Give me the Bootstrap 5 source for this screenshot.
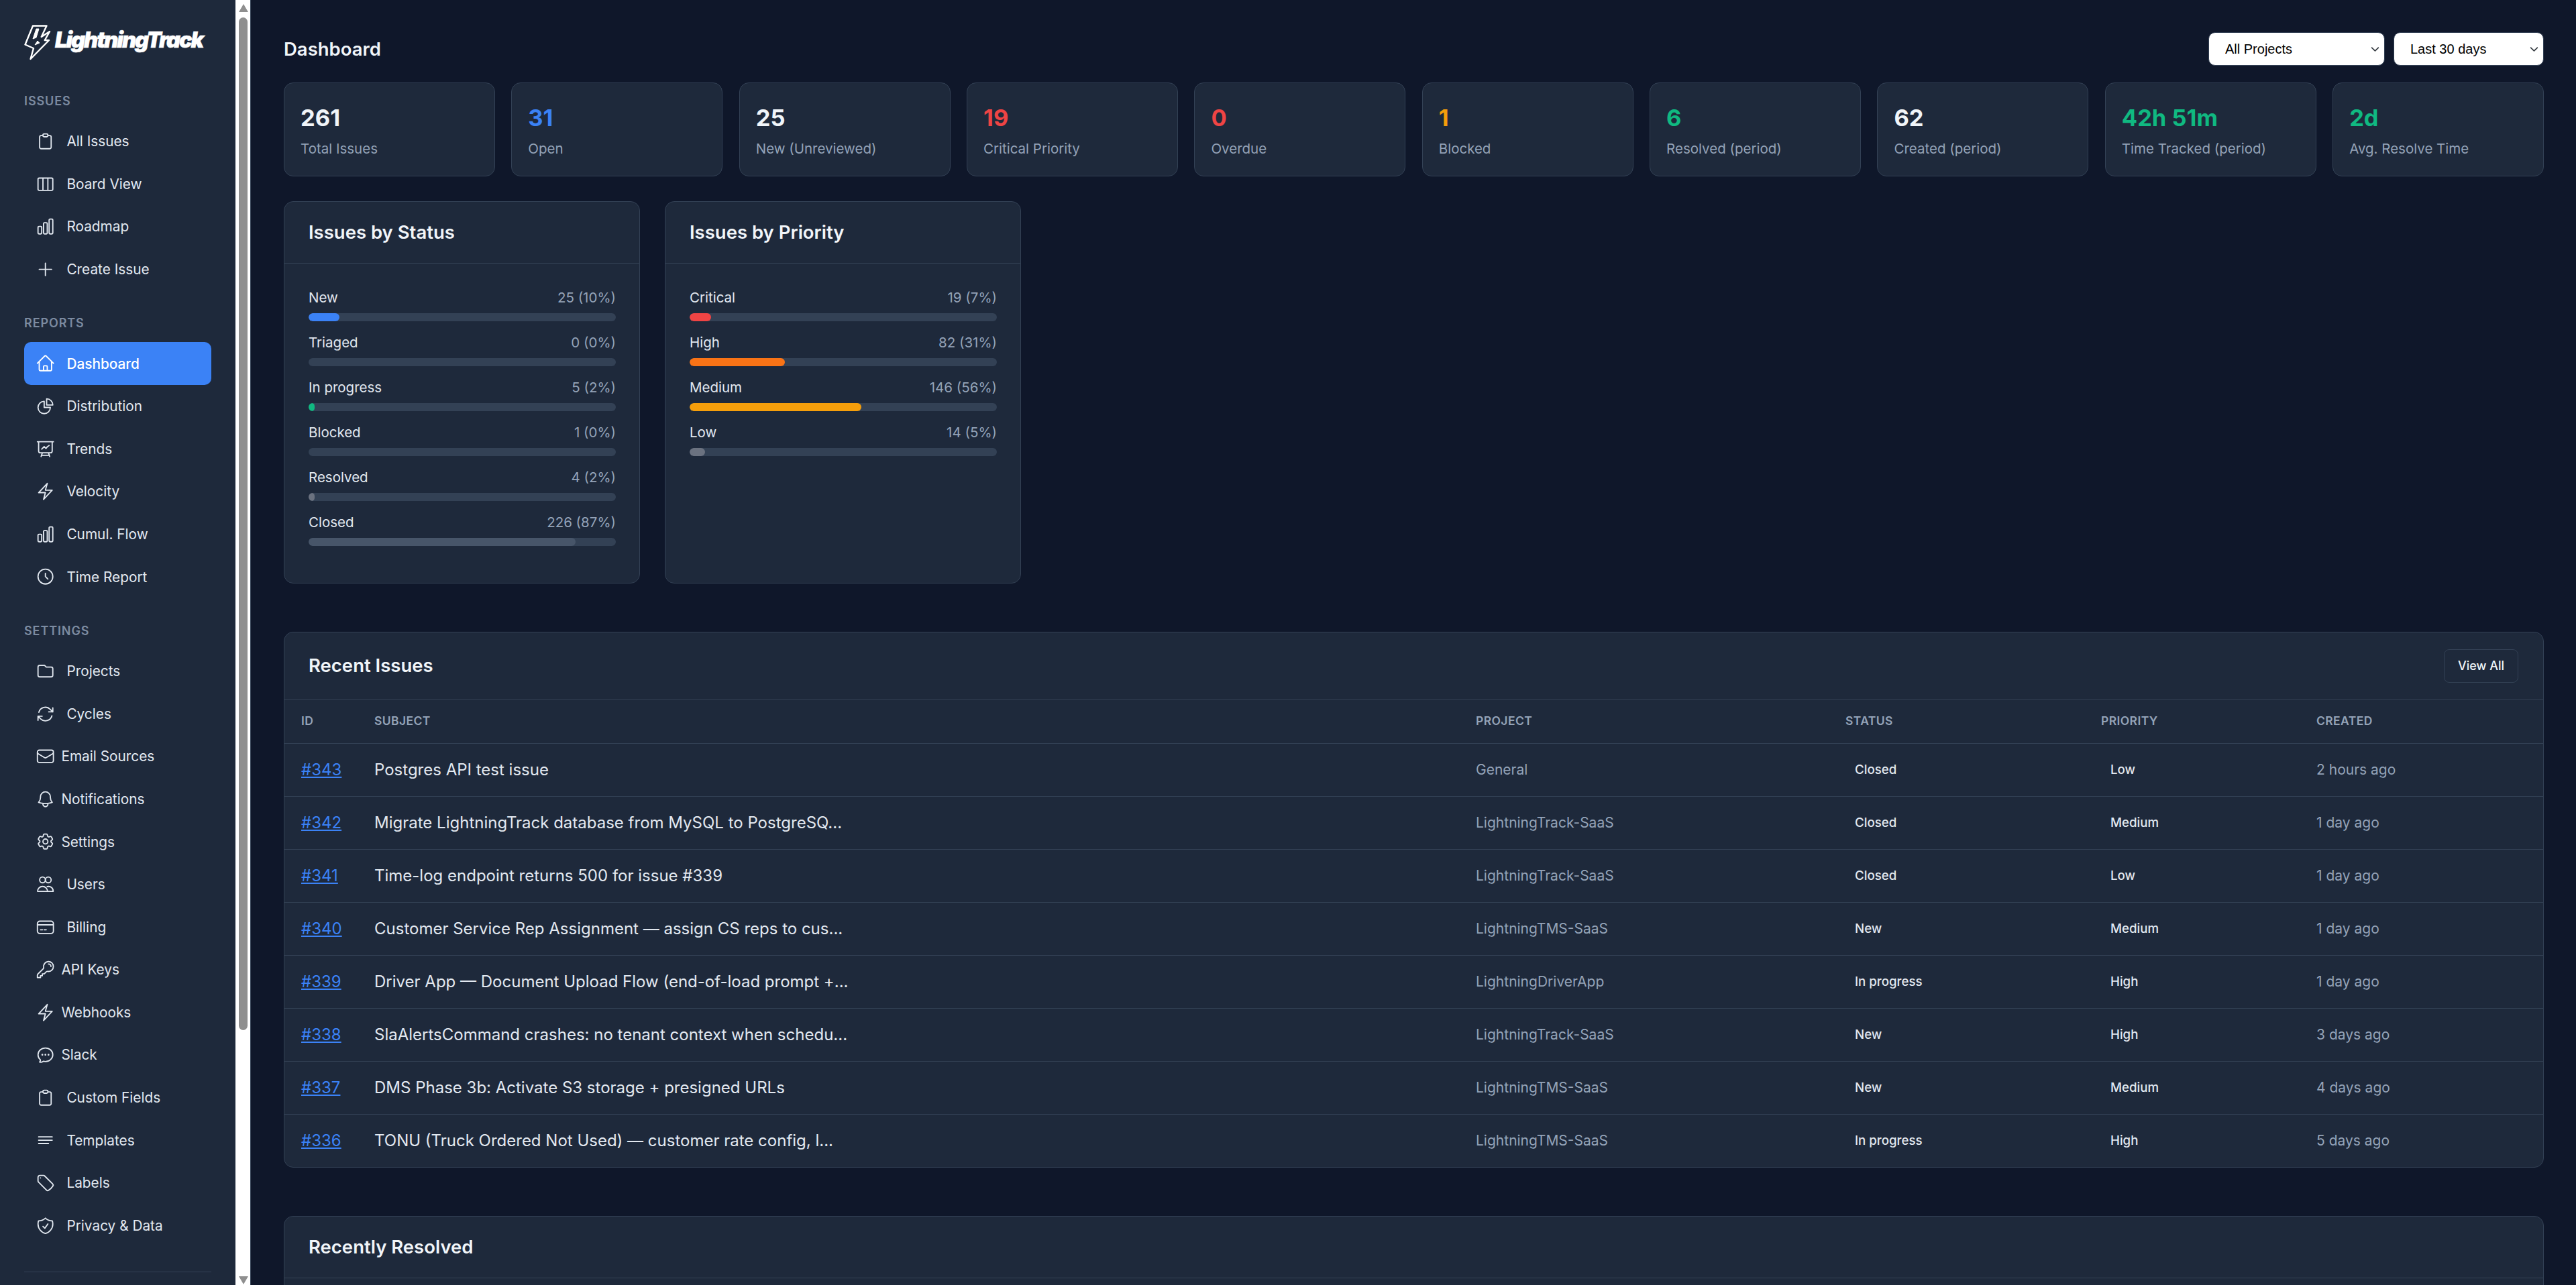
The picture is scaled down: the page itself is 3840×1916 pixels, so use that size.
<!DOCTYPE html>
<html lang="en">
<head>
<meta charset="UTF-8">
<meta name="viewport" content="width=device-width, initial-scale=1.0">
<title>LightningTrack - Dashboard</title>
<link href="https://cdn.jsdelivr.net/npm/bootstrap@5.3.2/dist/css/bootstrap.min.css" rel="stylesheet">
<style>
body { background: #0f172a; color: #e2e8f0; font-family: Inter, "Liberation Sans", sans-serif; height: 100vh; overflow: hidden; }

/* sidebar */
.side-bar { width: 351px; flex: none; background: #1e293b; padding: 37px 36px 0; overflow: hidden; }
.brand { height: 53px; margin-bottom: 47px; gap: 6px; color: #fff; text-decoration: none; }
.brand-icon { width: 40px; height: 54px; flex: none; }
.brand-text { font-size: 32.5px; font-weight: 900; font-style: italic; letter-spacing: -2px; line-height: 1; margin-bottom: 6px; -webkit-text-stroke: .6px #fff; }
.side-label { font-size: 18px; font-weight: 600; letter-spacing: .9px; color: #7c8ba1; text-transform: uppercase; line-height: 27px; margin-bottom: 15px; }
.side-group { margin-bottom: 35px; }
.side-nav .nav-link { height: 63.6px; padding: 0 0 0 17px; color: #e2e8f0; font-size: 20.8px; font-weight: 400; border-radius: 10px; gap: 17px; }
.side-nav .nav-link.tight { gap: 9px; }
.side-nav .nav-link.active { background: #3b82f6; color: #fff; font-weight: 500; }
.side-icon { width: 29.4px; height: 29.4px; flex: none; fill: none; stroke: currentColor; stroke-width: 1.5; stroke-linecap: round; stroke-linejoin: round; }
.side-rule { border-top: 1px solid #334155; margin-top: 37px; }

/* fake classic scrollbar of the sidebar */
.side-scroll { width: 23px; flex: none; background: #fff; border-right: 1px solid #334155; padding: 6px 0 0 5px; }
.scroll-up, .scroll-down { width: 0; height: 0; margin-left: 0; border-left: 7.5px solid transparent; border-right: 7.5px solid transparent; }
.scroll-up { border-bottom: 12px solid #8f8f8f; }
.scroll-down { border-top: 12px solid #8f8f8f; margin-top: 367px; }
.scroll-thumb { width: 13px; height: 1510px; margin-top: 8px; background: #8f8f8f; border-radius: 7px; }

/* main area */
.main-area { flex: 1; min-width: 0; padding: 48px 48px 0 49px; overflow: hidden; }
.page-title { font-size: 27.5px; font-weight: 600; color: #f1f5f9; margin: 0; }
.filter-wrap { gap: 13px; }
.filter-select { height: 50px; padding: 0 24px; font-family: "Liberation Sans", sans-serif; font-size: 20px; color: #000; background-color: #fff; border: 1px solid #334155; border-radius: 10px; background-position: right 5px center; background-size: 17px 13px; }
.filter-projects { width: 263px; }
.filter-days { width: 224px; }

.stat-grid { display: grid; grid-template-columns: repeat(10, 1fr); gap: 24.5px; margin-top: 25px; }
.panel { background: #1e293b; border: 1px solid #334155; border-radius: 14px; color: #e2e8f0; --bs-card-cap-bg: transparent; }
.stat-box { height: 140px; padding: 26px 24px 0; }
.stat-num { font-size: 34.5px; font-weight: 700; line-height: 52px; color: #f1f5f9; }
.stat-cap { font-size: 20.5px; line-height: 30px; color: #94a3b8; margin-top: 5px; white-space: nowrap; }
.c-blue { color: #3b82f6; }
.c-red { color: #ef4444; }
.c-amber { color: #f59e0b; }
.c-green { color: #10b981; }

.chart-grid { display: grid; grid-template-columns: repeat(auto-fill, 531px); gap: 37px; margin-top: 37px; }
.panel-head { height: 92px; padding: 0 36px; border-bottom: 1px solid #334155; }
.panel-title { font-size: 27.5px; font-weight: 600; color: #f1f5f9; margin: 0; }
.panel-body { padding: 37px 35px 37px 36px; }
.bar-row { margin-bottom: 18px; }
.bar-top { font-size: 20.5px; line-height: 28px; margin-bottom: 9px; }
.bar-val { color: #94a3b8; }
.bar-track { height: 12px; background: #334155; border-radius: 6px; }
.bar-track .progress-bar { border-radius: 6px; }
.bg-sblue { background: #3b82f6; }
.bg-sgreen { background: #10b981; }
.bg-sgrey { background: #6b7280; }
.bg-sslate { background: #475569; }
.bg-sred { background: #ef4444; }
.bg-sorange { background: #f97316; }
.bg-samber { background: #f59e0b; }

.list-panel { margin-top: 72px; overflow: hidden; }
.list-panel .head-tall { height: 100px; padding-right: 37px; }
.view-btn { height: 50px; width: 111px; padding: 0; font-size: 18px; font-weight: 500; color: #f1f5f9; background: transparent; border: 1px solid #334155; border-radius: 8px; }
.issue-table { table-layout: fixed; margin: 0; --bs-table-bg: transparent; --bs-table-color: #e2e8f0; --bs-table-border-color: #334155; }
.issue-table th { height: 65px; padding: 0 25px; font-size: 17.5px; font-weight: 600; letter-spacing: .4px; color: #94a3b8; text-transform: uppercase; vertical-align: middle; }
.issue-table td { height: 79px; padding: 0 25px; vertical-align: middle; font-size: 24px; line-height: 36px; white-space: nowrap; overflow: hidden; }
.issue-table tbody tr:last-child td { border-bottom: 0; }
.col-id { width: 109px; }
.col-subject { width: 1642px; }
.col-project { width: 551px; }
.col-status { width: 381px; }
.col-priority { width: 321px; }
.issue-id { color: #3b82f6; }
.issue-table td.cell-dim { font-size: 21px; color: #94a3b8; }
.issue-table td.cell-tag { font-size: 18.7px; }
.tag-text { display: inline-block; padding: 0 14px; font-weight: 500; color: #e2e8f0; }
.tail-body { height: 200px; }
</style>
</head>
<body>
<svg width="0" height="0" class="position-absolute">
  <symbol id="i-clip" viewBox="0 0 24 24"><path d="M9 5H6.8A1.8 1.8 0 0 0 5 6.8v12.4A1.8 1.8 0 0 0 6.8 21h10.4a1.8 1.8 0 0 0 1.8-1.8V6.8A1.8 1.8 0 0 0 17.200 5H15M9 5V4.500A1.500 1.500 0 0 1 10.500 3h3A1.500 1.500 0 0 1 15 4.500V5a1.500 1.500 0 0 1-1.500 1.500h-3A1.500 1.500 0 0 1 9 5z"/></symbol>
  <symbol id="i-cols" viewBox="0 0 24 24"><path d="M9 4.500v15m6-15v15M4.500 19.500h15a1.500 1.500 0 0 0 1.500-1.500V6a1.500 1.500 0 0 0-1.500-1.500h-15A1.500 1.500 0 0 0 3 6v12a1.500 1.500 0 0 0 1.500 1.500z"/></symbol>
  <symbol id="i-bars" viewBox="0 0 24 24"><path d="M3 13.125C3 12.504 3.504 12 4.125 12h2.250c.621 0 1.125.504 1.125 1.125v6.750C7.500 20.496 6.996 21 6.375 21h-2.250A1.125 1.125 0 0 1 3 19.875v-6.750zM9.750 8.625c0-.621.504-1.125 1.125-1.125h2.250c.621 0 1.125.504 1.125 1.125v11.250c0 .621-.504 1.125-1.125 1.125h-2.250a1.125 1.125 0 0 1-1.125-1.125V8.625zM16.500 4.125c0-.621.504-1.125 1.125-1.125h2.250C20.496 3 21 3.504 21 4.125v15.750c0 .621-.504 1.125-1.125 1.125h-2.250a1.125 1.125 0 0 1-1.125-1.125V4.125z"/></symbol>
  <symbol id="i-plus" viewBox="0 0 24 24"><path d="M12 4.500v15m7.500-7.500h-15"/></symbol>
  <symbol id="i-home" viewBox="0 0 24 24"><path d="M2.250 12l8.954-8.955c.44-.439 1.152-.439 1.591 0L21.750 12M4.500 9.750v10.125c0 .621.504 1.125 1.125 1.125H9.750v-4.875c0-.621.504-1.125 1.125-1.125h2.250c.621 0 1.125.504 1.125 1.125V21h4.125c.621 0 1.125-.504 1.125-1.125V9.750M8.250 21h8.250"/></symbol>
  <symbol id="i-pie" viewBox="0 0 24 24"><path d="M10.500 6a7.500 7.500 0 1 0 7.500 7.500h-7.500V6z"/><path d="M13.500 10.500H21A7.500 7.500 0 0 0 13.500 3v7.500z"/></symbol>
  <symbol id="i-trend" viewBox="0 0 24 24"><path d="M3.750 3v11.250A2.250 2.250 0 0 0 6 16.500h2.250M3.750 3h-1.500m1.500 0h16.500m0 0h1.500m-1.500 0v11.250A2.250 2.250 0 0 1 18 16.500h-2.250m-7.500 0h7.500m-7.500 0l-1 3m8.500-3l1 3m0 0l.5 1.500m-.5-1.500h-9.500m0 0l-.5 1.500m.75-9l3-3 2.148 2.148A12.061 12.061 0 0 1 16.500 7.605"/></symbol>
  <symbol id="i-bolt" viewBox="0 0 24 24"><path d="M3.750 13.500l10.500-11.250L12 10.500h8.250L9.750 21.750 12 13.500H3.750z"/></symbol>
  <symbol id="i-clock" viewBox="0 0 24 24"><path d="M12 8v4l3 3m6-3a9 9 0 1 1-18 0 9 9 0 0 1 18 0z"/></symbol>
  <symbol id="i-folder" viewBox="0 0 24 24"><path d="M3 7v10a2 2 0 0 0 2 2h14a2 2 0 0 0 2-2V9a2 2 0 0 0-2-2h-6l-2-2H5a2 2 0 0 0-2 2z"/></symbol>
  <symbol id="i-cycle" viewBox="0 0 24 24"><path d="M16.023 9.348h4.992v-.001M2.985 19.644v-4.992m0 0h4.992m-4.993 0l3.181 3.183a8.250 8.250 0 0 0 13.803-3.700M4.031 9.865a8.250 8.250 0 0 1 13.803-3.700l3.181 3.182m0-4.991v4.990"/></symbol>
  <symbol id="i-mail" viewBox="0 0 24 24"><path d="M21.750 6.750v10.500a2.250 2.250 0 0 1-2.250 2.250h-15a2.250 2.250 0 0 1-2.250-2.250V6.750m19.500 0A2.250 2.250 0 0 0 19.500 4.500h-15a2.250 2.250 0 0 0-2.250 2.250m19.500 0v.243a2.250 2.250 0 0 1-1.070 1.916l-7.500 4.615a2.250 2.250 0 0 1-2.360 0L3.320 8.910a2.250 2.250 0 0 1-1.070-1.916V6.750"/></symbol>
  <symbol id="i-bell" viewBox="0 0 24 24"><path d="M14.857 17.082a23.848 23.848 0 0 0 5.454-1.310A8.967 8.967 0 0 1 18 9.750v-.7V9A6 6 0 0 0 6 9v.75a8.967 8.967 0 0 1-2.312 6.022c1.733.64 3.560 1.085 5.455 1.310m5.714 0a24.255 24.255 0 0 1-5.714 0m5.714 0a3 3 0 1 1-5.714 0"/></symbol>
  <symbol id="i-cog" viewBox="0 0 24 24"><path d="M9.594 3.940c.09-.542.56-.94 1.110-.94h2.593c.55 0 1.020.398 1.110.94l.213 1.281c.063.374.313.686.645.87.074.04.147.083.22.127.324.196.72.257 1.075.124l1.217-.456a1.125 1.125 0 0 1 1.370.49l1.296 2.247a1.125 1.125 0 0 1-.26 1.431l-1.003.827c-.293.24-.438.613-.431.992a6.759 6.759 0 0 1 0 .255c-.007.378.138.75.43.99l1.005.828c.424.35.534.954.26 1.430l-1.298 2.247a1.125 1.125 0 0 1-1.369.491l-1.217-.456c-.355-.133-.75-.072-1.076.124a6.570 6.570 0 0 1-.22.128c-.331.183-.581.495-.644.869l-.213 1.280c-.09.543-.56.941-1.110.941h-2.594c-.55 0-1.020-.398-1.110-.94l-.213-1.281c-.062-.374-.312-.686-.644-.87a6.520 6.520 0 0 1-.22-.127c-.325-.196-.72-.257-1.076-.124l-1.217.456a1.125 1.125 0 0 1-1.369-.49l-1.297-2.247a1.125 1.125 0 0 1 .26-1.431l1.004-.827c.292-.24.437-.613.43-.992a6.932 6.932 0 0 1 0-.255c.007-.378-.138-.75-.43-.99l-1.004-.828a1.125 1.125 0 0 1-.26-1.430l1.297-2.247a1.125 1.125 0 0 1 1.370-.491l1.216.456c.356.133.751.072 1.076-.124.072-.044.146-.087.22-.128.332-.183.582-.495.644-.869l.214-1.281z"/><path d="M15 12a3 3 0 1 1-6 0 3 3 0 0 1 6 0z"/></symbol>
  <symbol id="i-users" viewBox="0 0 24 24"><circle cx="8.500" cy="6.500" r="3.500"/><circle cx="15.500" cy="6.500" r="3.500"/><path d="M2.500 20.500c0-3.500 2.600-6 6-6s6 2.500 6 6zM14.200 14.700c4.200-.9 7.300 1.700 7.300 5.800h-7"/></symbol>
  <symbol id="i-card" viewBox="0 0 24 24"><path d="M2.250 9h19.500M6 15h2.500M10.500 15H13M5.250 4.500h13.500a3 3 0 0 1 3 3v9a3 3 0 0 1-3 3H5.250a3 3 0 0 1-3-3v-9a3 3 0 0 1 3-3z"/></symbol>
  <symbol id="i-key" viewBox="0 0 24 24"><path d="M15.750 5.250a3 3 0 0 1 3 3m3 0a6 6 0 0 1-7.029 5.912c-.563-.097-1.159.026-1.563.43L10.500 17.250H8.250v2.250H6v2.250H2.250v-2.818c0-.597.237-1.170.659-1.591l6.499-6.499c.404-.404.527-1 .43-1.563A6 6 0 1 1 21.750 8.250z"/></symbol>
  <symbol id="i-chat" viewBox="0 0 24 24"><path d="M8.625 12a.375.375 0 1 1-.75 0 .375.375 0 0 1 .75 0zm0 0H8.250m4.125 0a.375.375 0 1 1-.75 0 .375.375 0 0 1 .75 0zm0 0H12m4.125 0a.375.375 0 1 1-.75 0 .375.375 0 0 1 .75 0zm0 0h-.375M21 12c0 4.556-4.030 8.250-9 8.250a9.764 9.764 0 0 1-2.555-.337A5.972 5.972 0 0 1 5.410 20.970a5.969 5.969 0 0 1-.474-.065 4.480 4.480 0 0 0 .978-2.025c.09-.457-.133-.901-.467-1.226C3.930 16.178 3 14.189 3 12c0-4.556 4.030-8.250 9-8.250s9 3.694 9 8.250z"/></symbol>
  <symbol id="i-lines" viewBox="0 0 24 24"><path d="M3.750 7.500h16.500M3.750 11.500h16.500M3.750 15.500h12"/></symbol>
  <symbol id="i-tag" viewBox="0 0 24 24"><path d="M9.568 3H5.250A2.250 2.250 0 0 0 3 5.250v4.318c0 .597.237 1.170.659 1.591l9.581 9.581c.699.699 1.780.872 2.607.33a18.095 18.095 0 0 0 5.223-5.223c.542-.827.369-1.908-.33-2.607L11.160 3.660A2.250 2.250 0 0 0 9.568 3z"/><path d="M6 6h.008v.008H6V6z"/></symbol>
  <symbol id="i-shield" viewBox="0 0 24 24"><path d="M9 12.750L11.250 15 15 9.750m-3-7.036A11.959 11.959 0 0 1 3.598 6 11.990 11.990 0 0 0 3 9.749c0 5.592 3.824 10.290 9 11.623 5.176-1.332 9-6.030 9-11.622 0-1.310-.21-2.571-.598-3.751h-.152c-3.196 0-6.100-1.248-8.250-3.285z"/></symbol>
</svg>

<div class="d-flex vh-100">
  <!-- sidebar -->
  <aside class="side-bar">
    <a href="#" class="brand d-flex align-items-center">
      <svg class="brand-icon" viewBox="0 0 40 54" fill="none" stroke="#fff" stroke-width="2.400" stroke-linejoin="round"><path d="M13 1.500H33.500L25.700 18 38 10 30.700 23H37L9.500 51 14 35 1.500 29.500z"/><path d="M18 6h4l-4 13-5 2z" fill="#fff" stroke-width="1"/><path d="M20 24l-4 6 7-3z" fill="#fff" stroke-width="1"/></svg>
      <span class="brand-text">LightningTrack</span>
    </a>

    <div class="side-group">
      <div class="side-label">Issues</div>
      <nav class="nav nav-pills flex-column side-nav">
        <a class="nav-link d-flex align-items-center" href="#"><svg class="side-icon"><use href="#i-clip"/></svg>All Issues</a>
        <a class="nav-link d-flex align-items-center" href="#"><svg class="side-icon"><use href="#i-cols"/></svg>Board View</a>
        <a class="nav-link d-flex align-items-center" href="#"><svg class="side-icon"><use href="#i-bars"/></svg>Roadmap</a>
        <a class="nav-link d-flex align-items-center" href="#"><svg class="side-icon"><use href="#i-plus"/></svg>Create Issue</a>
      </nav>
    </div>

    <div class="side-group">
      <div class="side-label">Reports</div>
      <nav class="nav nav-pills flex-column side-nav">
        <a class="nav-link active d-flex align-items-center" href="#"><svg class="side-icon"><use href="#i-home"/></svg>Dashboard</a>
        <a class="nav-link d-flex align-items-center" href="#"><svg class="side-icon"><use href="#i-pie"/></svg>Distribution</a>
        <a class="nav-link d-flex align-items-center" href="#"><svg class="side-icon"><use href="#i-trend"/></svg>Trends</a>
        <a class="nav-link d-flex align-items-center" href="#"><svg class="side-icon"><use href="#i-bolt"/></svg>Velocity</a>
        <a class="nav-link d-flex align-items-center" href="#"><svg class="side-icon"><use href="#i-bars"/></svg>Cumul. Flow</a>
        <a class="nav-link d-flex align-items-center" href="#"><svg class="side-icon"><use href="#i-clock"/></svg>Time Report</a>
      </nav>
    </div>

    <div>
      <div class="side-label">Settings</div>
      <nav class="nav nav-pills flex-column side-nav">
        <a class="nav-link d-flex align-items-center" href="#"><svg class="side-icon"><use href="#i-folder"/></svg>Projects</a>
        <a class="nav-link d-flex align-items-center" href="#"><svg class="side-icon"><use href="#i-cycle"/></svg>Cycles</a>
        <a class="nav-link tight d-flex align-items-center" href="#"><svg class="side-icon"><use href="#i-mail"/></svg>Email Sources</a>
        <a class="nav-link tight d-flex align-items-center" href="#"><svg class="side-icon"><use href="#i-bell"/></svg>Notifications</a>
        <a class="nav-link tight d-flex align-items-center" href="#"><svg class="side-icon"><use href="#i-cog"/></svg>Settings</a>
        <a class="nav-link d-flex align-items-center" href="#"><svg class="side-icon"><use href="#i-users"/></svg>Users</a>
        <a class="nav-link d-flex align-items-center" href="#"><svg class="side-icon"><use href="#i-card"/></svg>Billing</a>
        <a class="nav-link tight d-flex align-items-center" href="#"><svg class="side-icon"><use href="#i-key"/></svg>API Keys</a>
        <a class="nav-link tight d-flex align-items-center" href="#"><svg class="side-icon"><use href="#i-bolt"/></svg>Webhooks</a>
        <a class="nav-link tight d-flex align-items-center" href="#"><svg class="side-icon"><use href="#i-chat"/></svg>Slack</a>
        <a class="nav-link d-flex align-items-center" href="#"><svg class="side-icon"><use href="#i-clip"/></svg>Custom Fields</a>
        <a class="nav-link d-flex align-items-center" href="#"><svg class="side-icon"><use href="#i-lines"/></svg>Templates</a>
        <a class="nav-link d-flex align-items-center" href="#"><svg class="side-icon"><use href="#i-tag"/></svg>Labels</a>
        <a class="nav-link d-flex align-items-center" href="#"><svg class="side-icon"><use href="#i-shield"/></svg>Privacy &amp; Data</a>
      </nav>
    </div>
    <div class="side-rule"></div>
  </aside>
  <div class="side-scroll">
    <div class="scroll-up"></div>
    <div class="scroll-thumb"></div>
    <div class="scroll-down"></div>
  </div>

  <!-- main -->
  <main class="main-area">
    <div class="d-flex justify-content-between align-items-center">
      <h1 class="page-title">Dashboard</h1>
      <div class="d-flex filter-wrap">
        <select class="form-select filter-select filter-projects"><option>All Projects</option></select>
        <select class="form-select filter-select filter-days"><option>Last 30 days</option></select>
      </div>
    </div>

    <div class="stat-grid">
      <div class="card panel stat-box"><div class="stat-num">261</div><div class="stat-cap">Total Issues</div></div>
      <div class="card panel stat-box"><div class="stat-num c-blue">31</div><div class="stat-cap">Open</div></div>
      <div class="card panel stat-box"><div class="stat-num">25</div><div class="stat-cap">New (Unreviewed)</div></div>
      <div class="card panel stat-box"><div class="stat-num c-red">19</div><div class="stat-cap">Critical Priority</div></div>
      <div class="card panel stat-box"><div class="stat-num c-red">0</div><div class="stat-cap">Overdue</div></div>
      <div class="card panel stat-box"><div class="stat-num c-amber">1</div><div class="stat-cap">Blocked</div></div>
      <div class="card panel stat-box"><div class="stat-num c-green">6</div><div class="stat-cap">Resolved (period)</div></div>
      <div class="card panel stat-box"><div class="stat-num">62</div><div class="stat-cap">Created (period)</div></div>
      <div class="card panel stat-box"><div class="stat-num c-green">42h 51m</div><div class="stat-cap">Time Tracked (period)</div></div>
      <div class="card panel stat-box"><div class="stat-num c-green">2d</div><div class="stat-cap">Avg. Resolve Time</div></div>
    </div>

    <div class="chart-grid">
      <div class="card panel">
        <div class="panel-head d-flex align-items-center"><h2 class="panel-title">Issues by Status</h2></div>
        <div class="panel-body">
          <div class="bar-row"><div class="bar-top d-flex justify-content-between"><span>New</span><span class="bar-val">25 (10%)</span></div><div class="progress bar-track"><div class="progress-bar bg-sblue" style="width:10%"></div></div></div>
          <div class="bar-row"><div class="bar-top d-flex justify-content-between"><span>Triaged</span><span class="bar-val">0 (0%)</span></div><div class="progress bar-track"><div class="progress-bar bg-sgrey" style="width:0%"></div></div></div>
          <div class="bar-row"><div class="bar-top d-flex justify-content-between"><span>In progress</span><span class="bar-val">5 (2%)</span></div><div class="progress bar-track"><div class="progress-bar bg-sgreen" style="width:2%"></div></div></div>
          <div class="bar-row"><div class="bar-top d-flex justify-content-between"><span>Blocked</span><span class="bar-val">1 (0%)</span></div><div class="progress bar-track"><div class="progress-bar bg-sred" style="width:0%"></div></div></div>
          <div class="bar-row"><div class="bar-top d-flex justify-content-between"><span>Resolved</span><span class="bar-val">4 (2%)</span></div><div class="progress bar-track"><div class="progress-bar bg-sgrey" style="width:2%"></div></div></div>
          <div class="bar-row"><div class="bar-top d-flex justify-content-between"><span>Closed</span><span class="bar-val">226 (87%)</span></div><div class="progress bar-track"><div class="progress-bar bg-sslate" style="width:87%"></div></div></div>
        </div>
      </div>
      <div class="card panel">
        <div class="panel-head d-flex align-items-center"><h2 class="panel-title">Issues by Priority</h2></div>
        <div class="panel-body">
          <div class="bar-row"><div class="bar-top d-flex justify-content-between"><span>Critical</span><span class="bar-val">19 (7%)</span></div><div class="progress bar-track"><div class="progress-bar bg-sred" style="width:7%"></div></div></div>
          <div class="bar-row"><div class="bar-top d-flex justify-content-between"><span>High</span><span class="bar-val">82 (31%)</span></div><div class="progress bar-track"><div class="progress-bar bg-sorange" style="width:31%"></div></div></div>
          <div class="bar-row"><div class="bar-top d-flex justify-content-between"><span>Medium</span><span class="bar-val">146 (56%)</span></div><div class="progress bar-track"><div class="progress-bar bg-samber" style="width:56%"></div></div></div>
          <div class="bar-row"><div class="bar-top d-flex justify-content-between"><span>Low</span><span class="bar-val">14 (5%)</span></div><div class="progress bar-track"><div class="progress-bar bg-sgrey" style="width:5%"></div></div></div>
        </div>
      </div>
    </div>

    <div class="card panel list-panel">
      <div class="panel-head head-tall d-flex align-items-center justify-content-between">
        <h2 class="panel-title">Recent Issues</h2>
        <button class="btn view-btn">View All</button>
      </div>
      <table class="table issue-table">
        <colgroup><col class="col-id"><col class="col-subject"><col class="col-project"><col class="col-status"><col class="col-priority"><col></colgroup>
        <thead><tr><th>ID</th><th>Subject</th><th>Project</th><th>Status</th><th>Priority</th><th>Created</th></tr></thead>
        <tbody>
          <tr><td><a href="#" class="issue-id">#343</a></td><td>Postgres API test issue</td><td class="cell-dim">General</td><td class="cell-tag"><span class="tag-text">Closed</span></td><td class="cell-tag"><span class="tag-text">Low</span></td><td class="cell-dim">2 hours ago</td></tr>
          <tr><td><a href="#" class="issue-id">#342</a></td><td>Migrate LightningTrack database from MySQL to PostgreSQ...</td><td class="cell-dim">LightningTrack-SaaS</td><td class="cell-tag"><span class="tag-text">Closed</span></td><td class="cell-tag"><span class="tag-text">Medium</span></td><td class="cell-dim">1 day ago</td></tr>
          <tr><td><a href="#" class="issue-id">#341</a></td><td>Time-log endpoint returns 500 for issue #339</td><td class="cell-dim">LightningTrack-SaaS</td><td class="cell-tag"><span class="tag-text">Closed</span></td><td class="cell-tag"><span class="tag-text">Low</span></td><td class="cell-dim">1 day ago</td></tr>
          <tr><td><a href="#" class="issue-id">#340</a></td><td>Customer Service Rep Assignment — assign CS reps to cus...</td><td class="cell-dim">LightningTMS-SaaS</td><td class="cell-tag"><span class="tag-text">New</span></td><td class="cell-tag"><span class="tag-text">Medium</span></td><td class="cell-dim">1 day ago</td></tr>
          <tr><td><a href="#" class="issue-id">#339</a></td><td>Driver App — Document Upload Flow (end-of-load prompt +...</td><td class="cell-dim">LightningDriverApp</td><td class="cell-tag"><span class="tag-text">In progress</span></td><td class="cell-tag"><span class="tag-text">High</span></td><td class="cell-dim">1 day ago</td></tr>
          <tr><td><a href="#" class="issue-id">#338</a></td><td>SlaAlertsCommand crashes: no tenant context when schedu...</td><td class="cell-dim">LightningTrack-SaaS</td><td class="cell-tag"><span class="tag-text">New</span></td><td class="cell-tag"><span class="tag-text">High</span></td><td class="cell-dim">3 days ago</td></tr>
          <tr><td><a href="#" class="issue-id">#337</a></td><td>DMS Phase 3b: Activate S3 storage + presigned URLs</td><td class="cell-dim">LightningTMS-SaaS</td><td class="cell-tag"><span class="tag-text">New</span></td><td class="cell-tag"><span class="tag-text">Medium</span></td><td class="cell-dim">4 days ago</td></tr>
          <tr><td><a href="#" class="issue-id">#336</a></td><td>TONU (Truck Ordered Not Used) — customer rate config, l...</td><td class="cell-dim">LightningTMS-SaaS</td><td class="cell-tag"><span class="tag-text">In progress</span></td><td class="cell-tag"><span class="tag-text">High</span></td><td class="cell-dim">5 days ago</td></tr>
        </tbody>
      </table>
    </div>

    <div class="card panel list-panel">
      <div class="panel-head d-flex align-items-center"><h2 class="panel-title">Recently Resolved</h2></div>
      <div class="tail-body"></div>
    </div>
  </main>
</div>
<script src="https://cdn.jsdelivr.net/npm/bootstrap@5.3.2/dist/js/bootstrap.bundle.min.js"></script>
</body>
</html>
